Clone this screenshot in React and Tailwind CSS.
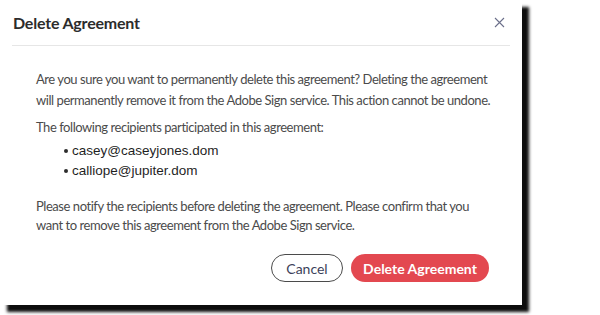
import React from "react";

const RECIPIENTS = ["casey@caseyjones.dom", "calliope@jupiter.dom"];

function CloseIcon() {
  return (
    <svg width="11" height="11" viewBox="0 0 11 11" className="text-[#6b6f8a]">
      <path d="M1 1L10 10M10 1L1 10" stroke="currentColor" strokeWidth="1.1" fill="none" />
    </svg>
  );
}

export default function App() {
  return (
    <div className="w-[600px] h-[315px] bg-white overflow-hidden">
      <div
        className="w-[522px] h-[305px] bg-white shadow-[7px_7px_3px_rgba(0,0,0,0.95)] flex flex-col text-[#4b4b4b]"
        style={{ fontFamily: "Lato, 'Open Sans', sans-serif" }}
      >
        <div className="flex items-center justify-between h-[46px] mx-[12px] border-b border-[#e6e6e6] pl-[1px] pr-[5px]">
          <h2 className="text-[16px] font-bold text-[#2c2c2c] tracking-[-0.2px]">Delete Agreement</h2>
          <CloseIcon />
        </div>

        <div className="px-[36px] pt-[23px] text-[13px] leading-[21px] whitespace-nowrap tracking-[-0.45px]">
          <p>
            Are you sure you want to permanently delete this agreement? Deleting the agreement
            <br />
            will permanently remove it from the Adobe Sign service. This action cannot be undone.
          </p>
          <p className="mt-[6px]">The following recipients participated in this agreement:</p>
          <ul className="pl-[28px] mt-[3px] tracking-normal" style={{ fontFamily: "'Liberation Sans', Arial, sans-serif" }}>
            {RECIPIENTS.map((r) => (
              <li key={r} className="flex items-center gap-[4px] leading-[20px] text-[13.5px] text-[#1f1f1f]">
                <span className="w-[4px] h-[4px] rounded-full bg-[#2c2c2c]" />
                <span>{r}</span>
              </li>
            ))}
          </ul>
          <p className="mt-[16px] leading-[19px]">
            Please notify the recipients before deleting the agreement. Please confirm that you
            <br />
            want to remove this agreement from the Adobe Sign service.
          </p>
        </div>

        <div className="flex justify-end gap-[8px] pr-[33px] mt-[19px]">
          <button className="h-[28px] w-[72px] rounded-full border border-[#4b4b4b] text-[14px] text-[#3c3f5a]">
            Cancel
          </button>
          <button className="h-[28px] w-[138px] rounded-full bg-[#e34850] text-white text-[14px] font-bold">
            Delete Agreement
          </button>
        </div>
      </div>
    </div>
  );
}
